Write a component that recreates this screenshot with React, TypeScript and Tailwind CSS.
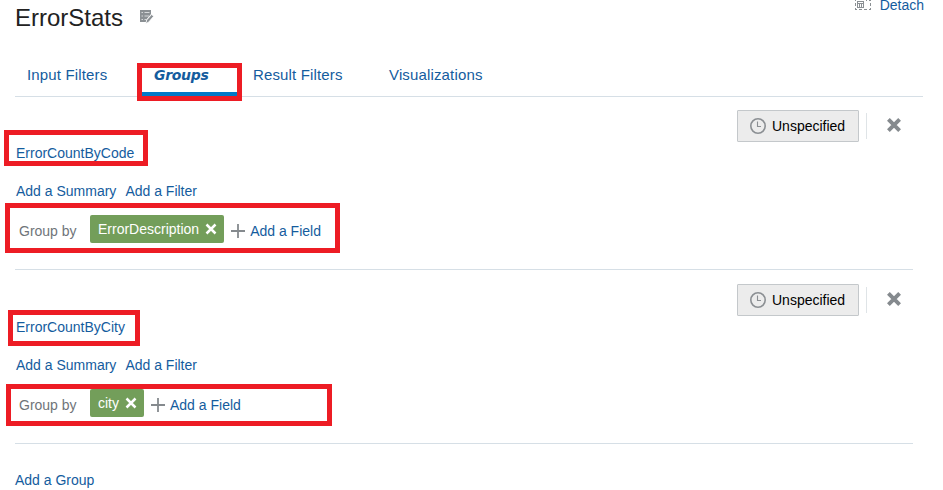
type Group = { name: string; field: string };

const groups: Group[] = [
  { name: 'ErrorCountByCode', field: 'ErrorDescription' },
  { name: 'ErrorCountByCity', field: 'city' },
];

function EditIcon() {
  return (
    <svg width="14" height="14" viewBox="0 0 14 14" className="mt-[10px] ml-[17px]">
      <path d="M0 0h11v4L6 10v2H0z" fill="#8b9094" />
      <path d="M1.500 2.500h1.500M4.500 2.500h5M1.500 6h1.500M4.500 6h4.500M1.500 9.500h1.500M4.500 9.500h1.500" stroke="#fff" strokeOpacity=".65" strokeWidth="1" />
      <path d="M5.800 13.600l.9-3.600L11.600 4.500l2 1.800-4.900 5.800z" fill="#8b9094" stroke="#fff" strokeWidth=".7" />
    </svg>
  );
}

function DetachIcon() {
  return (
    <svg width="16" height="10" viewBox="0 0 16 10" shapeRendering="crispEdges" stroke="#8b9094" fill="none">
      <path d="M.5 0v1M.5 3v3M15.500 3v3M.5 8v2M15.500 8v2M0 9.500h2M4 9.500h3M9 9.500h3M14 9.500h2M11 .5h1M14 .5h2" />
      <path d="M2.500 1.500h6v6h-6zM3 3.500h5M4.500 4v3M6.500 4v3" />
    </svg>
  );
}

function ClockIcon() {
  return (
    <svg width="16" height="16" viewBox="0 0 16 16" fill="none" stroke="#8b8f93">
      <circle cx="8" cy="8" r="7.200" strokeWidth="1.600" />
      <path d="M7.500 3.500v5H11" strokeWidth="1.100" />
    </svg>
  );
}

function CloseIcon() {
  return (
    <svg width="16" height="14" viewBox="0 0 16 14" className="mt-[8px] ml-[19px]">
      <path d="M2.400 1.400l11.200 11.200M13.600 1.400L2.400 12.600" stroke="#858a8e" strokeWidth="3.900" />
    </svg>
  );
}

function GroupSection({ group }: { group: Group }) {
  return (
    <section className="h-[174px] w-[898px] border-b border-[#d6dfe6] pt-[14px]">
      <div className="flex h-8 pl-[722px]">
        <button className="flex h-8 w-[122px] shrink-0 items-center gap-[6px] rounded-[1px] border border-[#c4c8cb] bg-[#ececec] pl-3 text-black">
          <ClockIcon />
          Unspecified
        </button>
        <div className="mt-[3px] ml-[7px] h-[26px] w-px shrink-0 bg-[#dfe4e7]" />
        <CloseIcon />
      </div>
      <div className="mt-px ml-px h-5">{group.name}</div>
      <div className="mt-[18px] ml-px flex h-5 gap-[9px]">
        <span>Add a Summary</span>
        <span>Add a Filter</span>
      </div>
      <div className="mt-[14px] flex h-7 items-start">
        <span className="ml-1 w-[71px] pt-[6px] text-[#6f7479]">Group by</span>
        <span className="flex h-7 items-center gap-[6px] rounded-[2px] bg-[#739e5a] pr-[7px] pl-2 text-white">
          {group.field}
          <svg width="12" height="12" viewBox="0 0 12 12">
            <path d="M1.500 1.500l9 9M10.500 1.500l-9 9" stroke="#fff" strokeWidth="2.500" />
          </svg>
        </span>
        <svg width="14" height="14" viewBox="0 0 14 14" className="mt-[9px] ml-[7px]">
          <path d="M7 0v14M0 7h14" stroke="#858a8e" strokeWidth="1.800" />
        </svg>
        <span className="ml-[5px] pt-[6px]">Add a Field</span>
      </div>
    </section>
  );
}

export default function App() {
  return (
    <main className="relative h-[490px] w-[943px] overflow-hidden bg-white pl-[15px] font-['Liberation_Sans',Arial,sans-serif] text-[14px] leading-5 text-[#145c9e]">
      <header className="flex h-[50px] w-[909px] items-start">
        <h1 className="pt-1 text-[24px] leading-7 text-[#222]">ErrorStats</h1>
        <EditIcon />
        <div className="ml-auto flex items-start gap-[9px]">
          <DetachIcon />
          <span className="leading-[10px]">Detach</span>
        </div>
      </header>
      <nav className="flex h-[47px] w-[908px] border-b border-[#d6dfe6] text-[15px] tracking-[0.15px]">
        <span className="ml-3 w-[115px] pt-[15px]">Input Filters</span>
        <span className="h-[46px] w-[95px] border-b-4 border-[#0079c8] pt-[15px] pl-3 font-['DejaVu_Sans',sans-serif] text-[14px] font-bold tracking-[-0.3px] italic">
          Groups
        </span>
        <span className="ml-4 w-[136px] pt-[15px]">Result Filters</span>
        <span className="pt-[15px]">Visualizations</span>
      </nav>
      <div className="-mt-px">
        {groups.map((group) => (
          <GroupSection key={group.name} group={group} />
        ))}
      </div>
      <div className="mt-[26px]">Add a Group</div>

      <div className="absolute top-[63px] left-[137px] h-[38px] w-[105px] border-5 border-[#ed1c24]" />
      <div className="absolute top-[130px] left-[4px] h-[36px] w-[144px] border-5 border-[#ed1c24]" />
      <div className="absolute top-[203px] left-[5px] h-[50px] w-[335px] border-5 border-[#ed1c24]" />
      <div className="absolute top-[310px] left-[8px] h-[36px] w-[132px] border-5 border-[#ed1c24]" />
      <div className="absolute top-[384px] left-[6px] h-[42px] w-[326px] border-5 border-[#ed1c24]" />
    </main>
  );
}
